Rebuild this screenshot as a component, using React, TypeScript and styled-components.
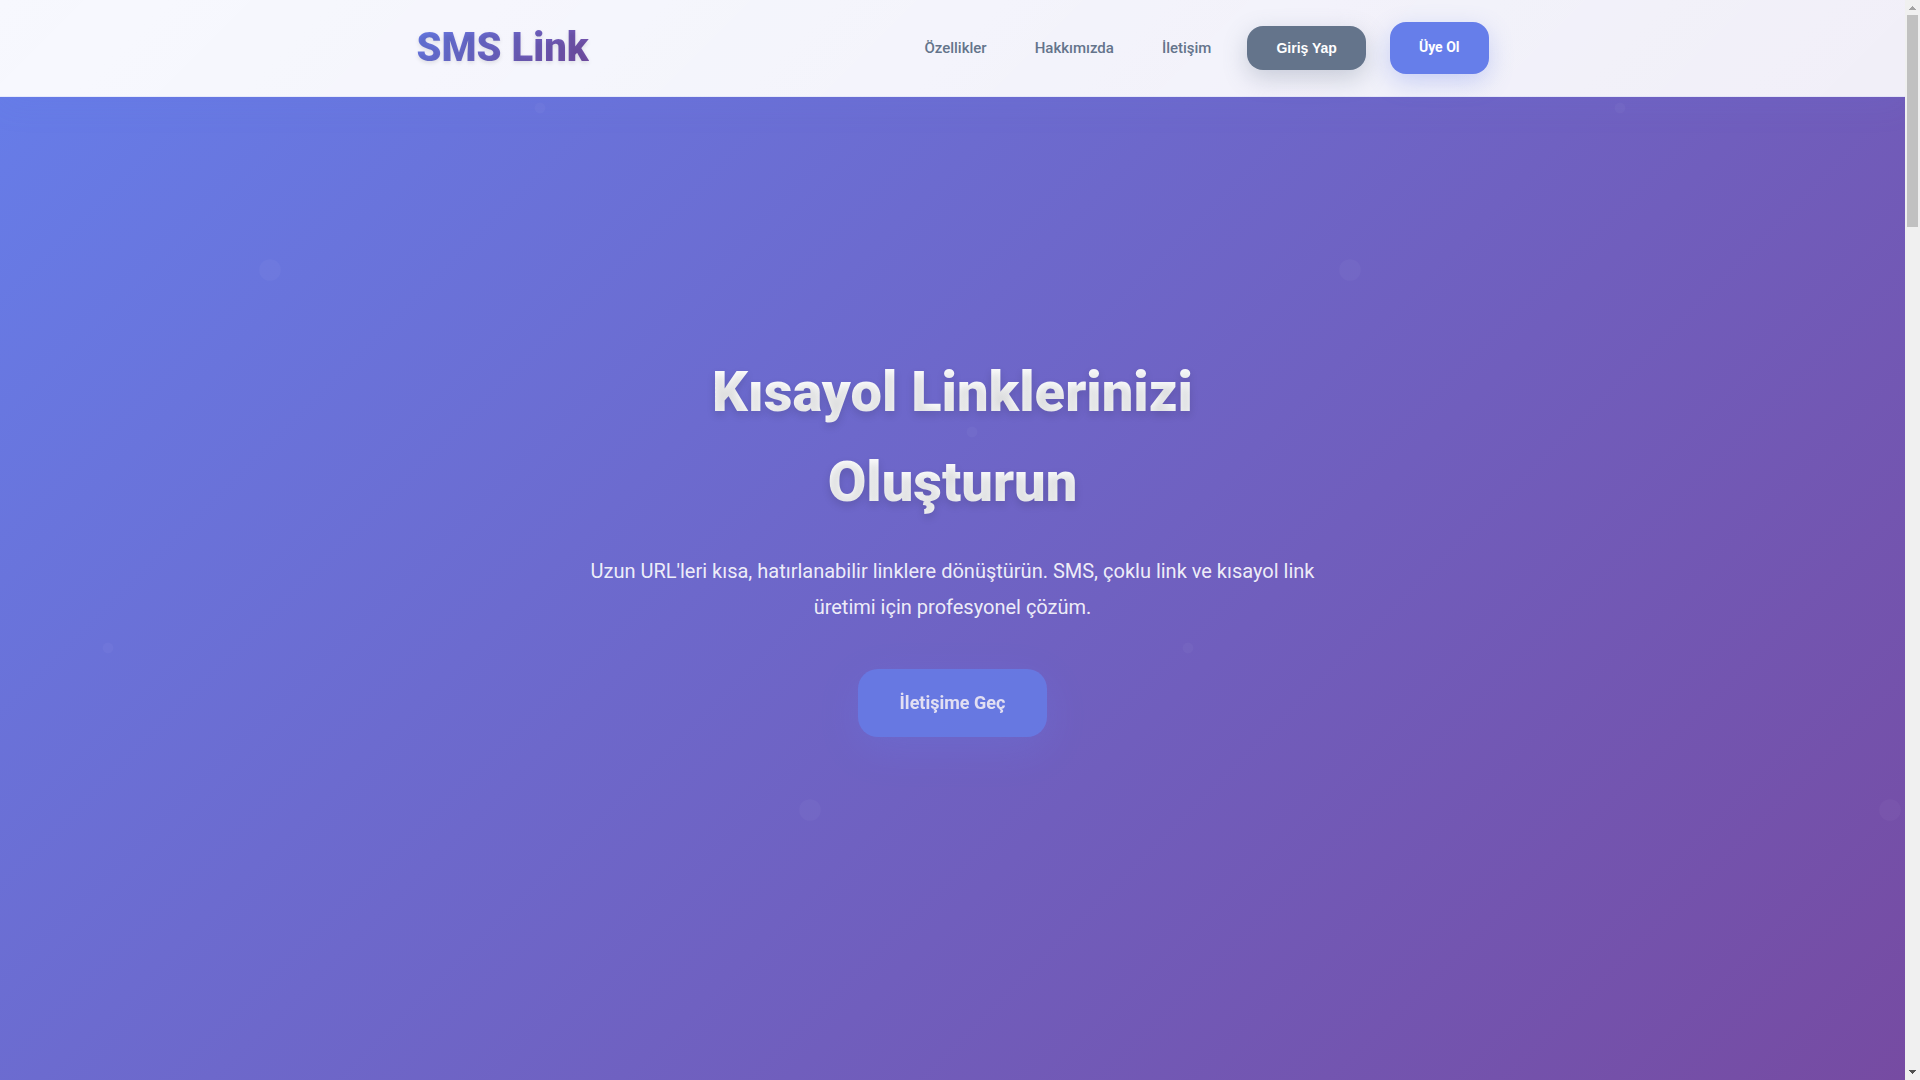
import React from "react";
import styled, { createGlobalStyle, css } from "styled-components";

const GlobalStyle = createGlobalStyle`
  *, *::before, *::after { box-sizing: border-box; }
  body {
    margin: 0;
    font-family: Roboto, "Liberation Sans", sans-serif;
    color: #1e293b;
  }
`;

const Screen = styled.div`
  display: flex;
  height: 100vh;
  overflow: hidden;
`;

const Page = styled.div`
  position: relative;
  flex: 1;
  min-width: 0;
  display: flex;
  flex-direction: column;
  overflow: hidden;
  background: linear-gradient(135deg, #667eea 0%, #764ba2 100%);
`;

const DotLayer = styled.div`
  position: absolute;
  inset: 0;
  display: flex;
  overflow: hidden;
  opacity: 0.3;
  pointer-events: none;
`;

const DotTileSvg = styled.svg`
  flex: none;
  height: 100%;
  aspect-ratio: 1;
`;

const Header = styled.header`
  position: relative;
  background: linear-gradient(135deg, rgba(255, 255, 255, 0.95), rgba(255, 255, 255, 0.9));
  border-bottom: 1px solid rgba(102, 126, 234, 0.1);
  box-shadow: 0 8px 32px rgba(102, 126, 234, 0.1);
`;

const HeaderInner = styled.div`
  max-width: 1200px;
  height: 96px;
  margin: 0 auto;
  padding: 0 64px;
  display: flex;
  align-items: center;
  justify-content: space-between;
`;

const Logo = styled.a`
  font-size: 40px;
  font-weight: 900;
  line-height: 64px;
  text-decoration: none;
  background: linear-gradient(135deg, #667eea 0%, #764ba2 100%);
  -webkit-background-clip: text;
  background-clip: text;
  -webkit-text-fill-color: transparent;
  text-shadow: 0 2px 4px rgba(0, 0, 0, 0.1);
`;

const Nav = styled.nav`
  display: flex;
  align-items: center;
  gap: 24px;
`;

const NavLink = styled.a`
  padding: 8px 12px;
  font-size: 15px;
  font-weight: 500;
  line-height: 24px;
  color: #64748b;
  text-decoration: none;
`;

const pill = css`
  border: 0;
  border-radius: 16px;
  font-size: 14px;
  font-weight: 700;
  color: #fff;
`;

const LoginButton = styled.button`
  ${pill}
  padding: 14px 29px;
  font-family: "Liberation Sans", Arial, sans-serif;
  line-height: 16px;
  background: #64748b;
  box-shadow: 0 8px 24px rgba(100, 116, 139, 0.3);
  cursor: pointer;
`;

const SignupLink = styled.a`
  ${pill}
  padding: 14px 29px 16px;
  line-height: 22px;
  text-decoration: none;
  background: #667eea;
  box-shadow: 0 8px 24px rgba(102, 126, 234, 0.3);
`;

const Hero = styled.main`
  position: relative;
  flex: 1;
  display: flex;
  align-items: center;
  justify-content: center;
  padding: 0 32px 94px;
`;

const HeroContent = styled.div`
  max-width: 736px;
  display: flex;
  flex-direction: column;
  align-items: center;
  text-align: center;
`;

const Title = styled.h1`
  margin: 0 0 26px;
  font-size: 56px;
  font-weight: 900;
  line-height: 90px;
  background: linear-gradient(135deg, #ffffff 0%, #f8fafc 100%);
  -webkit-background-clip: text;
  background-clip: text;
  -webkit-text-fill-color: transparent;
  text-shadow: 0 4px 8px rgba(0, 0, 0, 0.13);
`;

const Subtitle = styled.p`
  margin: 0 0 44px;
  font-size: 20px;
  line-height: 36px;
  color: rgba(255, 255, 255, 0.9);
`;

const CallToAction = styled.a`
  padding: 20px 42px;
  border-radius: 20px;
  font-size: 18px;
  font-weight: 700;
  line-height: 28px;
  color: #fff;
  text-decoration: none;
  background: #667eea;
  box-shadow: 0 12px 40px rgba(102, 126, 234, 0.3);
  opacity: 0.8;
`;

const ScrollTrack = styled.div`
  flex: none;
  width: 15px;
  display: flex;
  flex-direction: column;
  align-items: center;
  background: #f0f0f0;
`;

const ScrollArrow = styled.svg`
  flex: none;
  width: 15px;
  height: 15px;
`;

const ScrollRun = styled.div`
  flex: 1;
  width: 11px;
`;

const ScrollThumb = styled.div`
  height: 20.2%;
  background: #c1c1c1;
`;

const links = [
  { label: "Özellikler", href: "#ozellikler" },
  { label: "Hakkımızda", href: "#hakkimizda" },
  { label: "İletişim", href: "#iletisim" },
];

const dots = [
  { cx: 25, cy: 25, r: 1 },
  { cx: 75, cy: 75, r: 1 },
  { cx: 50, cy: 10, r: 0.5 },
  { cx: 10, cy: 60, r: 0.5 },
  { cx: 90, cy: 40, r: 0.5 },
];

function DotTile() {
  return (
    <DotTileSvg viewBox="0 0 100 100" aria-hidden="true">
      {dots.map((d) => (
        <circle key={`${d.cx}-${d.cy}`} {...d} fill="#fff" fillOpacity={0.1} />
      ))}
    </DotTileSvg>
  );
}

export default function App() {
  return (
    <Screen lang="tr">
      <GlobalStyle />
      <Page>
        <DotLayer>
          <DotTile />
          <DotTile />
          <DotTile />
        </DotLayer>
        <Header>
          <HeaderInner>
            <Logo href="#">SMS Link</Logo>
            <Nav>
              {links.map((l) => (
                <NavLink key={l.href} href={l.href}>
                  {l.label}
                </NavLink>
              ))}
              <LoginButton type="button">Giriş Yap</LoginButton>
              <SignupLink href="#uye-ol">Üye Ol</SignupLink>
            </Nav>
          </HeaderInner>
        </Header>
        <Hero>
          <HeroContent>
            <Title>Kısayol Linklerinizi Oluşturun</Title>
            <Subtitle>
              Uzun URL'leri kısa, hatırlanabilir linklere dönüştürün. SMS, çoklu link ve kısayol link
              üretimi için profesyonel çözüm.
            </Subtitle>
            <CallToAction href="#iletisim">İletişime Geç</CallToAction>
          </HeroContent>
        </Hero>
      </Page>
      <ScrollTrack aria-hidden="true">
        <ScrollArrow viewBox="0 0 15 15" shapeRendering="crispEdges">
          <path d="M4 10V9H5V8H6V7H7V6H8V7H9V8H10V9H11V10Z" fill="#a3a3a3" />
        </ScrollArrow>
        <ScrollRun>
          <ScrollThumb />
        </ScrollRun>
        <ScrollArrow viewBox="0 0 15 15" shapeRendering="crispEdges">
          <path d="M4 5V6H5V7H6V8H7V9H8V8H9V7H10V6H11V5Z" fill="#505050" />
        </ScrollArrow>
      </ScrollTrack>
    </Screen>
  );
}
